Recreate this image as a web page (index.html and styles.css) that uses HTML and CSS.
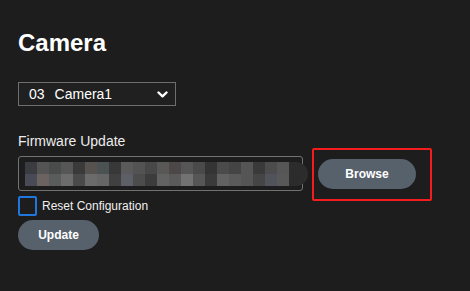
FILE: index.html
```html
<!DOCTYPE html>
<html>
<head>
  <title>Camera</title>
  <link rel="stylesheet" href="styles.css">
</head>
<body>
  <div class="page">
    <h1 class="title">Camera</h1>

    <div class="camera-select">
      <span class="cam-num">03</span>
      <span class="cam-name">Camera1</span>
      <svg class="chevron" width="11" height="7" viewBox="0 0 11 7">
        <polyline points="1.5,1.5 5.5,5.3 9.5,1.5" fill="none" stroke="#fff" stroke-width="2.4" stroke-linecap="round" stroke-linejoin="round"/>
      </svg>
    </div>

    <div class="label">Firmware Update</div>

    <div class="upload-row">
      <div class="file-box">
        <div class="file-name"></div>
      </div>
      <button class="btn btn-browse">Browse</button>
      <div class="highlight"></div>
    </div>

    <label class="check-row">
      <span class="checkbox"></span>
      Reset Configuration
    </label>

    <button class="btn btn-update">Update</button>
  </div>
</body>
</html>
```

FILE: styles.css
```css
body {
  margin: 0;
  background-color: #1d1d1d;
  color: #fff;
  font-family: "Liberation Sans", Arial, sans-serif;
}
.page {
  padding: 30px 18px 0 18px;
}
.title {
  margin: 0;
  font-size: 24px;
  line-height: 26px;
  font-weight: bold;
}
.camera-select {
  display: flex;
  align-items: center;
  box-sizing: border-box;
  width: 158px;
  height: 24px;
  margin-top: 26px;
  padding: 0 7px 0 10px;
  border: 1px solid #6e6e6e;
  background-color: #202020;
  font-size: 14px;
}
.cam-num {
  margin-right: 10px;
}
.cam-name {
  flex: 1;
}
.chevron {
  display: block;
}
.label {
  margin-top: 27px;
  font-size: 14px;
  line-height: 16px;
  color: #ececec;
}
.upload-row {
  position: relative;
  display: flex;
  align-items: center;
  margin-top: 7px;
}
.file-box {
  display: flex;
  align-items: center;
  box-sizing: border-box;
  width: 285px;
  height: 35px;
  padding-left: 6px;
  border: 1px solid #727272;
  border-radius: 3px;
}
.file-name {
  flex: none;
  width: 283px;
  height: 24px;
  border-radius: 0 12px 12px 0;
  background-color: #2c2c2c;
  background-image:
    linear-gradient(to right,
      #3b3b42 0 12px, #545454 12px 24px, #4a4c4c 24px 36px, #565656 36px 48px,
      #3a3a3a 48px 60px, #55524f 60px 72px, #4c5252 72px 84px, #383838 84px 96px,
      #5a5a5a 96px 108px, #535353 108px 120px, #484848 120px 132px, #5a5757 132px 144px,
      #4e4747 144px 156px, #565656 156px 168px, #4a4a4a 168px 180px, #343434 180px 192px,
      #4b4b4b 192px 204px, #444444 204px 216px, #555555 216px 228px, #3a3a3a 228px 240px,
      #4c4c4c 240px 252px, #565656 252px 264px, transparent 264px),
    linear-gradient(to right,
      #4a4a56 0 12px, #6a6360 12px 24px, #5a5c5c 24px 36px, #6c6c6c 36px 48px,
      #4a4a4a 48px 60px, #6b6b6b 60px 72px, #666666 72px 84px, #404040 84px 96px,
      #5c5f66 96px 108px, #4c4c4c 108px 120px, #3c3c3c 120px 132px, #626262 132px 144px,
      #5a5a5a 144px 156px, #727272 156px 168px, #565656 168px 180px, #3a3a3a 180px 192px,
      #626262 192px 204px, #5a5a5a 204px 216px, #555555 216px 228px, #454545 228px 240px,
      #52525a 240px 252px, #585858 252px 264px, transparent 264px);
  background-size: 100% 12px, 100% 12px;
  background-position: top left, bottom left;
  background-repeat: no-repeat;
}
.btn {
  display: block;
  height: 30px;
  padding: 0;
  border: none;
  border-radius: 15px;
  background-color: #57616c;
  color: #fff;
  font-family: "Liberation Sans", Arial, sans-serif;
  font-size: 12px;
  font-weight: bold;
  cursor: pointer;
}
.btn-browse {
  width: 98px;
  margin-left: 15px;
}
.highlight {
  position: absolute;
  left: 294px;
  top: -8px;
  width: 120px;
  height: 53px;
  box-sizing: border-box;
  border: 2px solid #f41c1c;
  border-radius: 2px;
}
.check-row {
  display: flex;
  align-items: center;
  margin-top: 5px;
  font-size: 12px;
  color: #f0f0f0;
}
.checkbox {
  box-sizing: border-box;
  width: 19px;
  height: 20px;
  margin-right: 5px;
  border: 2px solid #1f76dc;
  border-radius: 2px;
}
.btn-update {
  width: 81px;
  margin-top: 4px;
}
```
